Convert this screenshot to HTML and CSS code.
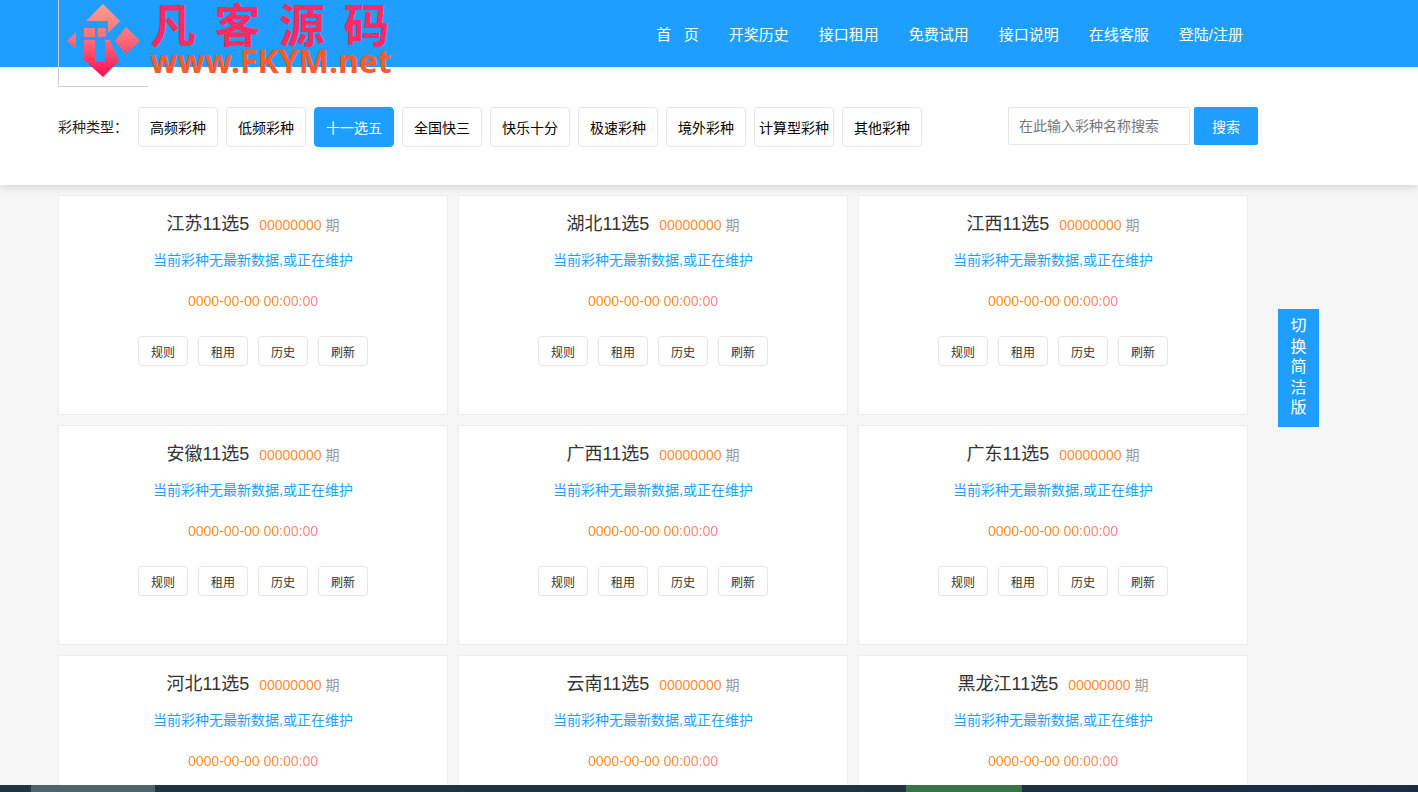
FILE: index.html
```html
<!DOCTYPE html>
<html lang="zh-CN">
<head>
<meta charset="utf-8">
<title>凡客源码</title>
<link rel="stylesheet" href="styles.css">
</head>
<body>
<header class="head">
  <div class="topbar">
    <div class="wrap topbar-in">
      <a class="logo" href="#">
        <svg class="logo-mark" viewBox="60 0 82 80" width="82" height="80" aria-hidden="true">
          <defs>
            <linearGradient id="lg" gradientUnits="userSpaceOnUse" x1="0" y1="4" x2="0" y2="77">
              <stop offset="0" stop-color="#ff9f90"/>
              <stop offset="0.5" stop-color="#ff6a7c"/>
              <stop offset="1" stop-color="#ff0f4e"/>
            </linearGradient>
          </defs>
          <g fill="url(#lg)">
            <polygon points="103,4 120,21 108,33 108,21 86,21"/>
            <polygon points="84,28 95,28 95,37 84,37"/>
            <polygon points="98,28 106,28 106,37 98,37"/>
            <polygon points="84,40 95,40 95,62 105,62 105,40 110,40 119,61 103,77 84,60"/>
            <polygon points="126,27 140,41 126,54 115,41"/>
            <polygon points="67,41 76,32 76,49"/>
          </g>
        </svg>
        <span class="logo-cn">凡客源码</span>
        <span class="logo-en">www.FKYM.net</span>
      </a>
      <nav class="nav">
        <a href="#">首&nbsp;&nbsp;&nbsp;页</a>
        <a href="#">开奖历史</a>
        <a href="#">接口租用</a>
        <a href="#">免费试用</a>
        <a href="#">接口说明</a>
        <a href="#">在线客服</a>
        <a href="#">登陆/注册</a>
      </nav>
    </div>
  </div>
  <div class="wrap filter">
    <span class="filter-label">彩种类型：</span>
    <div class="types">
      <a class="type" href="#">高频彩种</a>
      <a class="type" href="#">低频彩种</a>
      <a class="type is-on" href="#">十一选五</a>
      <a class="type" href="#">全国快三</a>
      <a class="type" href="#">快乐十分</a>
      <a class="type" href="#">极速彩种</a>
      <a class="type" href="#">境外彩种</a>
      <a class="type" href="#">计算型彩种</a>
      <a class="type" href="#">其他彩种</a>
    </div>
    <form class="search">
      <input class="search-input" type="text" placeholder="在此输入彩种名称搜索">
      <button class="search-btn" type="button">搜索</button>
    </form>
  </div>
</header>

<main class="wrap grid">
  <article class="card">
    <h3 class="card-title"><span class="name">江苏11选5</span><span class="issue">00000000</span><span class="qi">期</span></h3>
    <p class="notice">当前彩种无最新数据,或正在维护</p>
    <p class="time">0000-00-00 00:00:00</p>
    <div class="actions"><a href="#">规则</a><a href="#">租用</a><a href="#">历史</a><a href="#">刷新</a></div>
  </article>
  <article class="card">
    <h3 class="card-title"><span class="name">湖北11选5</span><span class="issue">00000000</span><span class="qi">期</span></h3>
    <p class="notice">当前彩种无最新数据,或正在维护</p>
    <p class="time">0000-00-00 00:00:00</p>
    <div class="actions"><a href="#">规则</a><a href="#">租用</a><a href="#">历史</a><a href="#">刷新</a></div>
  </article>
  <article class="card">
    <h3 class="card-title"><span class="name">江西11选5</span><span class="issue">00000000</span><span class="qi">期</span></h3>
    <p class="notice">当前彩种无最新数据,或正在维护</p>
    <p class="time">0000-00-00 00:00:00</p>
    <div class="actions"><a href="#">规则</a><a href="#">租用</a><a href="#">历史</a><a href="#">刷新</a></div>
  </article>
  <article class="card">
    <h3 class="card-title"><span class="name">安徽11选5</span><span class="issue">00000000</span><span class="qi">期</span></h3>
    <p class="notice">当前彩种无最新数据,或正在维护</p>
    <p class="time">0000-00-00 00:00:00</p>
    <div class="actions"><a href="#">规则</a><a href="#">租用</a><a href="#">历史</a><a href="#">刷新</a></div>
  </article>
  <article class="card">
    <h3 class="card-title"><span class="name">广西11选5</span><span class="issue">00000000</span><span class="qi">期</span></h3>
    <p class="notice">当前彩种无最新数据,或正在维护</p>
    <p class="time">0000-00-00 00:00:00</p>
    <div class="actions"><a href="#">规则</a><a href="#">租用</a><a href="#">历史</a><a href="#">刷新</a></div>
  </article>
  <article class="card">
    <h3 class="card-title"><span class="name">广东11选5</span><span class="issue">00000000</span><span class="qi">期</span></h3>
    <p class="notice">当前彩种无最新数据,或正在维护</p>
    <p class="time">0000-00-00 00:00:00</p>
    <div class="actions"><a href="#">规则</a><a href="#">租用</a><a href="#">历史</a><a href="#">刷新</a></div>
  </article>
  <article class="card">
    <h3 class="card-title"><span class="name">河北11选5</span><span class="issue">00000000</span><span class="qi">期</span></h3>
    <p class="notice">当前彩种无最新数据,或正在维护</p>
    <p class="time">0000-00-00 00:00:00</p>
    <div class="actions"><a href="#">规则</a><a href="#">租用</a><a href="#">历史</a><a href="#">刷新</a></div>
  </article>
  <article class="card">
    <h3 class="card-title"><span class="name">云南11选5</span><span class="issue">00000000</span><span class="qi">期</span></h3>
    <p class="notice">当前彩种无最新数据,或正在维护</p>
    <p class="time">0000-00-00 00:00:00</p>
    <div class="actions"><a href="#">规则</a><a href="#">租用</a><a href="#">历史</a><a href="#">刷新</a></div>
  </article>
  <article class="card">
    <h3 class="card-title"><span class="name">黑龙江11选5</span><span class="issue">00000000</span><span class="qi">期</span></h3>
    <p class="notice">当前彩种无最新数据,或正在维护</p>
    <p class="time">0000-00-00 00:00:00</p>
    <div class="actions"><a href="#">规则</a><a href="#">租用</a><a href="#">历史</a><a href="#">刷新</a></div>
  </article>
</main>

<a class="switch" href="#">切换简洁版</a>

<div class="bottom-bar">
  <span class="seg seg-a"></span>
  <span class="seg seg-b"></span>
  <span class="seg seg-c"></span>
  <span class="seg seg-d"></span>
  <span class="seg seg-e"></span>
</div>
</body>
</html>
```

FILE: styles.css
```css
* { box-sizing: border-box; }
html, body { height: 100%; }
body {
  margin: 0;
  height: 792px;
  overflow: hidden;
  background: #f6f6f6;
  color: #333;
  font-family: "Liberation Sans", "Noto Sans CJK SC", sans-serif;
  font-size: 14px;
}
a { color: inherit; text-decoration: none; }
p, h3 { margin: 0; font-weight: 400; }

.wrap { width: 1200px; margin-left: 58px; }

.head {
  position: relative;
  z-index: 2;
  height: 185px;
  background: #fff;
  box-shadow: 0 2px 8px rgba(0, 0, 0, 0.14);
}
.topbar { height: 67px; background: #1e9fff; }
.topbar-in { position: relative; height: 67px; }

.logo {
  position: absolute;
  left: 0;
  top: 0;
  width: 90px;
  height: 87px;
  border-left: 1px solid #ccc;
  border-bottom: 1px solid #ccc;
}
.logo-mark { position: absolute; left: 1px; top: 0; }
.logo-cn {
  position: absolute;
  left: 91px;
  top: -8px;
  width: 260px;
  font: 700 46px/60px "Noto Sans CJK SC", sans-serif;
  letter-spacing: 18.5px;
  white-space: nowrap;
  color: #ff2a5f;
}
.logo-en {
  position: absolute;
  left: 91px;
  top: 39px;
  font: 700 32px/44px "Noto Sans", sans-serif;
  white-space: nowrap;
  color: #ff5a2a;
}

.nav {
  display: flex;
  justify-content: flex-end;
  gap: 30px;
  height: 67px;
  padding-right: 15px;
  align-items: center;
  font-size: 15px;
  color: #fff;
}

.filter {
  display: flex;
  align-items: flex-start;
  padding-top: 40px;
}
.filter-label {
  width: 80px;
  line-height: 40px;
  font-size: 14px;
  color: #222;
  white-space: nowrap;
}
.types { display: flex; gap: 8px; }
.type {
  width: 80px;
  height: 40px;
  display: flex;
  align-items: center;
  justify-content: center;
  border: 1px solid #e6e6e6;
  border-radius: 4px;
  background: #fff;
  color: #000;
  font-size: 14px;
  white-space: nowrap;
}
.type.is-on { background: #1e9fff; border-color: #1e9fff; color: #fff; }

.search { display: flex; gap: 4px; margin-left: auto; }
.search-input {
  width: 182px;
  height: 38px;
  padding: 0 10px;
  border: 1px solid #e6e6e6;
  border-radius: 2px;
  outline: 0;
  font: 14px "Liberation Sans", "Noto Sans CJK SC", sans-serif;
  color: #333;
}
.search-input::placeholder { color: #757575; opacity: 1; }
.search-btn {
  width: 64px;
  height: 38px;
  padding: 0;
  border: 0;
  border-radius: 2px;
  background: #1e9fff;
  color: #fff;
  font: 14px "Liberation Sans", "Noto Sans CJK SC", sans-serif;
}

.grid {
  display: grid;
  grid-template-columns: repeat(3, 390px);
  grid-auto-rows: 220px;
  gap: 10px;
  padding-top: 10px;
}
.card {
  background: #fff;
  border: 1px solid #eee;
  text-align: center;
  padding-top: 14px;
}
.card-title {
  height: 28px;
  line-height: 28px;
  display: flex;
  justify-content: center;
  align-items: baseline;
  font-size: 14px;
  color: #333;
}
.name { font-size: 18px; margin-right: 10px; }
.issue { color: #ff8c37; margin-right: 4px; }
.qi { color: #999; }
.notice { margin-top: 12px; line-height: 20px; color: #1e9fff; }
.time {
  width: fit-content;
  margin: 21px auto 0;
  line-height: 20px;
  background: linear-gradient(90deg, #ff8a1f, #ff8a1f 55%, #ff7f8f);
  -webkit-background-clip: text;
  background-clip: text;
  color: transparent;
}
.actions {
  display: flex;
  justify-content: center;
  gap: 10px;
  margin-top: 25px;
}
.actions a {
  width: 50px;
  height: 30px;
  display: flex;
  align-items: center;
  justify-content: center;
  border: 1px solid #e6e6e6;
  border-radius: 4px;
  background: #fff;
  font-size: 12px;
  color: #333;
}

.switch {
  position: fixed;
  left: 1278px;
  top: 309px;
  width: 41px;
  height: 118px;
  padding: 7px 12px 0;
  background: #1e9fff;
  color: #fff;
  font-size: 16px;
  line-height: 20.5px;
  text-align: center;
}

.bottom-bar {
  position: fixed;
  left: 0;
  right: 0;
  bottom: 0;
  z-index: 3;
  height: 7px;
  display: flex;
  background: #1f333f;
}
.seg { display: block; height: 7px; }
.seg-a { width: 31px; background: #22343f; }
.seg-b { width: 124px; background: #4f636b; }
.seg-c { width: 751px; background: #20343f; }
.seg-d { width: 116px; background: #3a7249; }
.seg-e { flex: 1; background: linear-gradient(90deg, #1e2f42, #1c2a47); }
```
